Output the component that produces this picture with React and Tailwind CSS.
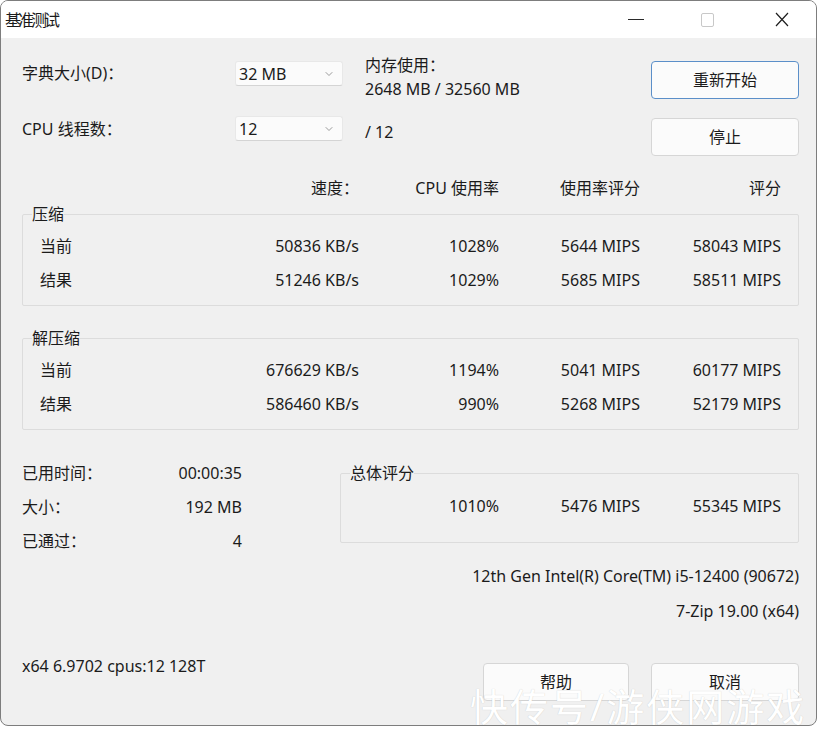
import React from 'react';
import { ChevronDown } from 'lucide-react';

const Select = ({ value }) => (
  <div className="w-[108px] h-[25px] bg-[#fbfbfb] border border-[#e8e8e8] border-b-[#d4d4d4] rounded-[3px] flex items-center justify-between pl-[3px] pr-[7px] leading-[20px]">
    <span>{value}</span>
    <ChevronDown size={12} strokeWidth={1.5} className="text-[#7a7a7a]" />
  </div>
);

const WinButton = ({ children, primary, width = 'w-[148px]' }) => (
  <div
    className={`${width} h-[38px] flex items-center justify-center rounded-[4px] bg-[#fbfbfb] ${
      primary ? 'border-[1.5px] border-[#5b8fc9]' : 'border border-[#d6d6d6]'
    }`}
  >
    {children}
  </div>
);

const Row = ({ label, speed, usage, rating, score }) => (
  <div className="flex h-[34px] items-center">
    <div className="w-[336px] flex justify-between pl-[17px]">
      <span>{label}</span>
      <span>{speed}</span>
    </div>
    <div className="w-[140px] text-right">{usage}</div>
    <div className="w-[141px] text-right">{rating}</div>
    <div className="w-[141px] text-right">{score}</div>
  </div>
);

const Group = ({ title, rows, className = '' }) => (
  <fieldset className={`border border-[#dcdcdc] rounded-[2px] pt-[5px] pb-[8px] ${className}`}>
    <legend className="ml-[9px] leading-[20px]">{title}</legend>
    {rows.map((r) => (
      <Row key={r.label} {...r} />
    ))}
  </fieldset>
);

const compress = [
  { label: '当前', speed: '50836 KB/s', usage: '1028%', rating: '5644 MIPS', score: '58043 MIPS' },
  { label: '结果', speed: '51246 KB/s', usage: '1029%', rating: '5685 MIPS', score: '58511 MIPS' },
];

const decompress = [
  { label: '当前', speed: '676629 KB/s', usage: '1194%', rating: '5041 MIPS', score: '60177 MIPS' },
  { label: '结果', speed: '586460 KB/s', usage: '990%', rating: '5268 MIPS', score: '52179 MIPS' },
];

export default function App() {
  return (
    <div className="relative w-[820px] h-[730px] bg-white overflow-hidden text-[16px] text-[#1b1b1b] font-['Noto_Sans','Noto_Sans_CJK_SC',sans-serif]">
      <div className="w-[817px] h-[726px] border border-[#7d7d7d] rounded-[8px] overflow-hidden bg-[#f0f0f0] flex flex-col">
        {/* title bar */}
        <div className="h-[37px] bg-white flex items-center">
          <span className="ml-[4px] text-[16px] tracking-[-3px] leading-[20px]">基准测试</span>
          <div className="ml-auto flex items-center">
            <div className="w-[16px] h-[1px] bg-[#2a2a2a] mr-[57px]" />
            <div className="w-[13px] h-[14px] border border-[#c8c8c8] rounded-[2px] mr-[61px]" />
            <svg width="14" height="15" viewBox="0 0 14 15" className="mr-[27px]">
              <path d="M1 1 L13 14 M13 1 L1 14" stroke="#1e1e1e" strokeWidth="1.2" fill="none" />
            </svg>
          </div>
        </div>

        {/* body */}
        <div className="flex-1 pt-[23px] pl-[21px] pr-[17px]">
          <div className="flex">
            <div className="flex-1">
              <div className="flex items-start h-[55px]">
                <span className="w-[213px] leading-[25px]">字典大小(D)：</span>
                <Select value="32 MB" />
                <div className="ml-[22px] -mt-[8px] leading-[24px]">
                  <div>内存使用：</div>
                  <div>2648 MB / 32560 MB</div>
                </div>
              </div>
              <div className="flex items-start">
                <span className="w-[213px] leading-[26px]">CPU 线程数：</span>
                <div className="h-[26px]">
                  <Select value="12" />
                </div>
                <span className="ml-[22px] leading-[26px] mt-[3px]">/ 12</span>
              </div>
            </div>
            <div className="flex flex-col gap-[19px]">
              <WinButton primary>重新开始</WinButton>
              <WinButton>停止</WinButton>
            </div>
          </div>

          {/* header */}
          <div className="flex mt-[22px] leading-[20px]">
            <div className="w-[337px] text-right">速度：</div>
            <div className="w-[140px] text-right">CPU 使用率</div>
            <div className="w-[141px] text-right">使用率评分</div>
            <div className="w-[141px] text-right">评分</div>
          </div>

          <Group title="压缩" rows={compress} className="mt-[6px]" />
          <Group title="解压缩" rows={decompress} className="mt-[22px] pt-[4px]" />

          {/* bottom summary */}
          <div className="flex items-start mt-[26px]">
            <div className="w-[220px]">
              <div className="h-[34px] flex items-center justify-between">
                <span>已用时间：</span>
                <span>00:00:35</span>
              </div>
              <div className="h-[34px] flex items-center justify-between">
                <span>大小：</span>
                <span>192 MB</span>
              </div>
              <div className="h-[34px] flex items-center justify-between">
                <span>已通过：</span>
                <span>4</span>
              </div>
            </div>
            <fieldset className="ml-[98px] mt-[7px] w-[459px] border border-[#dcdcdc] rounded-[2px] pt-[6px] pb-[19px]">
              <legend className="ml-[9px] leading-[20px]">总体评分</legend>
              <div className="flex h-[34px] items-center">
                <div className="w-[158px] text-right">1010%</div>
                <div className="w-[141px] text-right">5476 MIPS</div>
                <div className="w-[141px] text-right">55345 MIPS</div>
              </div>
            </fieldset>
          </div>

          <div className="flex flex-col items-end">
            <div className="h-[35px] flex items-center">12th Gen Intel(R) Core(TM) i5-12400 (90672)</div>
            <div className="h-[35px] flex items-center">7-Zip 19.00 (x64)</div>
          </div>

          <div className="flex items-start mt-[28px]">
            <span className="leading-[20px]">x64 6.9702 cpus:12 128T</span>
            <div className="ml-auto mt-[7px] flex gap-[22px]">
              <WinButton width="w-[146px]">帮助</WinButton>
              <WinButton>取消</WinButton>
            </div>
          </div>
        </div>
      </div>

      {/* watermark */}
      <div className="absolute left-[470px] top-[684px] text-[38px] leading-[44px] text-white tracking-[2px] whitespace-nowrap [text-shadow:0_0_1px_rgba(0,0,0,0.2)]">
        快传号/游侠网游戏
      </div>
    </div>
  );
}
